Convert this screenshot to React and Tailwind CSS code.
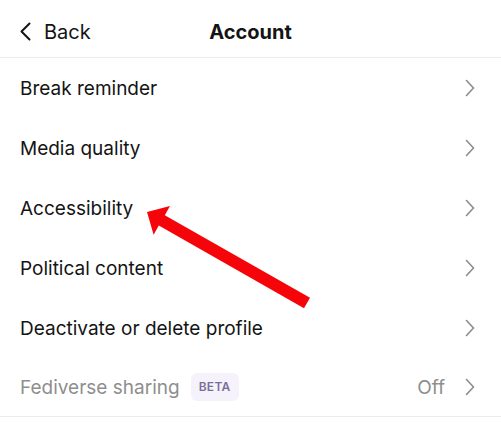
import React from 'react';

const Chevron = ({ className = '' }) => (
  <svg width="10" height="18" viewBox="0 0 10 18" fill="none" className={className}>
    <polyline points="1.5,1.5 8.5,9 1.5,16.5" stroke="currentColor" strokeWidth="1.6" strokeLinecap="round" strokeLinejoin="round" />
  </svg>
);

const rows = ['Break reminder', 'Media quality', 'Accessibility', 'Political content', 'Deactivate or delete profile'];

const App = () => {
  return (
    <div className="relative w-[501px] h-[422px] bg-white overflow-hidden text-[#141414]" style={{ fontFamily: 'Inter, "Noto Sans", sans-serif' }}>
      {/* Header */}
      <div className="relative h-[58px] flex items-center pt-[6px] px-5 border-b border-[#ebebeb]">
        <div className="flex items-center gap-[13px]">
          <svg width="11" height="19" viewBox="0 0 11 19" fill="none">
            <polyline points="9.5,1.5 1.5,9.5 9.5,17.5" stroke="#141414" strokeWidth="2" strokeLinecap="round" strokeLinejoin="round" />
          </svg>
          <span className="text-[20px] leading-none">Back</span>
        </div>
        <div className="absolute inset-x-0 top-0 h-full pt-[6px] flex items-center justify-center pointer-events-none">
          <span className="text-[20px] font-bold leading-none">Account</span>
        </div>
      </div>

      {/* Rows */}
      {rows.map((label) => (
        <div key={label} className="h-[60px] flex items-center justify-between pl-5 pr-[26px]">
          <span className="text-[19px] leading-none">{label}</span>
          <Chevron className="text-[#8c8c8c]" />
        </div>
      ))}

      <div className="h-[59px] flex items-center justify-between pl-5 pr-[26px] border-b border-[#ebebeb]">
        <div className="flex items-center gap-[11px]">
          <span className="text-[19px] leading-none text-[#8e8e8e]">Fediverse sharing</span>
          <span className="bg-[#f6f2fc] text-[#7b6f98] text-[12px] font-semibold tracking-wide px-[8px] h-[28px] flex items-center rounded-md">BETA</span>
        </div>
        <div className="flex items-center gap-[20px]">
          <span className="text-[19px] leading-none text-[#8e8e8e]">Off</span>
          <Chevron className="text-[#8c8c8c]" />
        </div>
      </div>

      {/* Red annotation arrow */}
      <svg className="absolute left-0 top-0 pointer-events-none" width="501" height="422" viewBox="0 0 501 422">
        <polygon
          points="147,212 170,206 164.8,215.2 310,297.8 304,308.2 158.8,225.6 153.6,234.7"
          fill="#f5050a"
        />
      </svg>
    </div>
  );
};

export default App;
